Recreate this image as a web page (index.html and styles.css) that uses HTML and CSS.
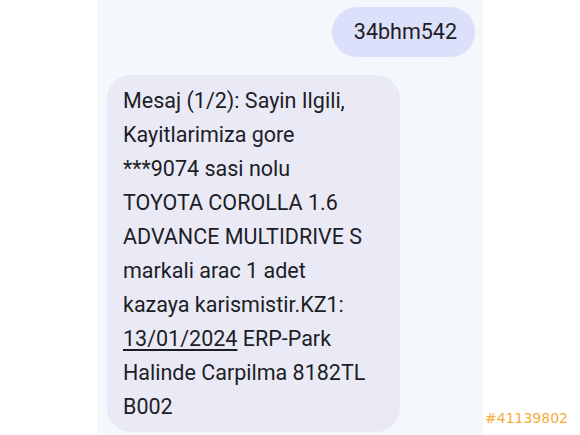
FILE: index.html
```html
<!DOCTYPE html>
<html lang="tr">
<head>
  <meta charset="UTF-8" />
  <meta name="viewport" content="width=device-width, initial-scale=1" />
  <title>Mesajlar</title>
  <link rel="stylesheet" href="styles.css">
</head>
<body>
  <div class="screen">
    <div class="bubble sent">34bhm542</div>
    <div class="bubble received">
      Mesaj (1/2): Sayin Ilgili,<br>
      Kayitlarimiza gore<br>
      ***9074 sasi nolu<br>
      TOYOTA COROLLA 1.6<br>
      ADVANCE MULTIDRIVE S<br>
      markali arac 1 adet<br>
      kazaya karismistir.KZ1:<br>
      <span class="date">13/01/2024</span> ERP-Park<br>
      Halinde Carpilma 8182TL<br>
      B002
    </div>
  </div>
  <div class="ref">#41139802</div>
</body>
</html>
```

FILE: styles.css
```css
body {
  margin: 0;
  background: #fff;
  font-family: Roboto, 'Noto Sans', sans-serif;
  color: #1d1d26;
  height: 435px;
  overflow: hidden;
  position: relative;
}
.screen {
  margin-left: 97px;
  width: 386px;
  height: 435px;
  background: #f4f7fb;
  display: flex;
  flex-direction: column;
}
.bubble {
  font-size: 21.5px;
}
.sent {
  align-self: flex-end;
  margin: 7px 8px 0 0;
  height: 50px;
  line-height: 50px;
  padding: 0 18px 0 22px;
  border-radius: 25px;
  background: #dde0fb;
}
.received {
  align-self: flex-start;
  margin: 18px 0 0 10px;
  width: 277px;
  padding: 9px 0 8px 16px;
  line-height: 34px;
  border-radius: 24px;
  background: #e9eaf5;
}
.date {
  text-decoration: underline;
  text-underline-offset: 3px;
}
.ref {
  position: absolute;
  left: 485px;
  top: 410px;
  font-family: 'DejaVu Sans', sans-serif;
  font-size: 14px;
  color: #f5ac3a;
}
```
